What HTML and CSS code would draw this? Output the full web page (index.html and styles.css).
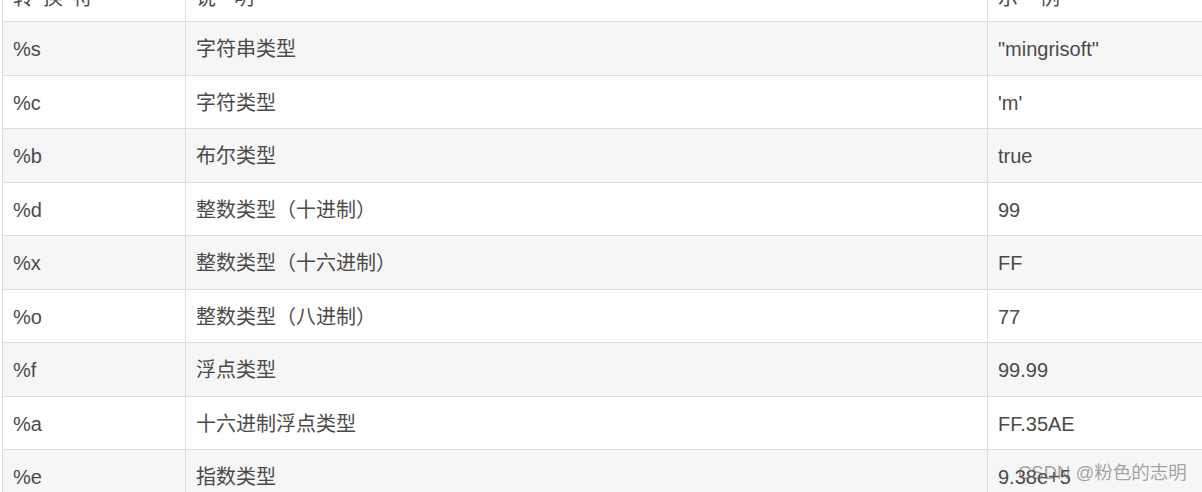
FILE: index.html
```html
<!DOCTYPE html>
<html lang="zh-CN">
<head>
<meta charset="utf-8">
<title>转换符</title>
<link rel="stylesheet" href="styles.css">
</head>
<body>
<div class="page">
  <table class="spec">
    <colgroup>
      <col class="c1">
      <col class="c2">
      <col class="c3">
    </colgroup>
    <thead>
      <tr>
        <th><span class="sp1">转换符</span></th>
        <th><span class="sp2">说明</span></th>
        <th><span class="sp3">示例</span></th>
      </tr>
    </thead>
    <tbody>
      <tr><td>%s</td><td>字符串类型</td><td>"mingrisoft"</td></tr>
      <tr><td>%c</td><td>字符类型</td><td>'m'</td></tr>
      <tr><td>%b</td><td>布尔类型</td><td>true</td></tr>
      <tr><td>%d</td><td>整数类型（十进制）</td><td>99</td></tr>
      <tr><td>%x</td><td>整数类型（十六进制）</td><td>FF</td></tr>
      <tr><td>%o</td><td>整数类型（八进制）</td><td>77</td></tr>
      <tr><td>%f</td><td>浮点类型</td><td>99.99</td></tr>
      <tr><td>%a</td><td>十六进制浮点类型</td><td>FF.35AE</td></tr>
      <tr><td>%e</td><td>指数类型</td><td>9.38e+5</td></tr>
    </tbody>
  </table>
  <div class="watermark">CSDN @粉色的志明</div>
</div>
</body>
</html>
```

FILE: styles.css
```css
html, body {
  margin: 0;
  padding: 0;
  background: #ffffff;
}

.page {
  position: relative;
  width: 1202px;
  height: 492px;
  overflow: hidden;
}

.spec {
  margin: -32.5px 0 0 2px;
  width: 1200px;
  border-collapse: collapse;
  table-layout: fixed;
  font-family: "Liberation Sans", "Noto Sans CJK SC", Arial, sans-serif;
  font-size: 20px;
  color: #4a4a4a;
}

.c1 { width: 183px; }
.c2 { width: 802px; }
.c3 { width: 215px; }

.spec th,
.spec td {
  border: 1px solid #dddddd;
  padding: 11px 10px 9px 10px;
  line-height: 32.5px;
  text-align: left;
  vertical-align: middle;
  white-space: nowrap;
}

.spec th {
  font-weight: normal;
  padding: 13px 10px 7px 10px;
  background: #ffffff;
}

.sp1 { letter-spacing: 10px; }
.sp2 { letter-spacing: 18px; }
.sp3 { letter-spacing: 22px; }

.spec tbody tr:nth-child(odd) {
  background: #f6f6f6;
}

.spec tbody tr:nth-child(even) {
  background: #ffffff;
}

.watermark {
  position: absolute;
  left: 1018px;
  top: 460px;
  font-family: "Liberation Sans", "Noto Sans CJK SC", Arial, sans-serif;
  font-size: 18.5px;
  line-height: 26px;
  color: rgba(105, 105, 105, 0.6);
  white-space: nowrap;
}
```
